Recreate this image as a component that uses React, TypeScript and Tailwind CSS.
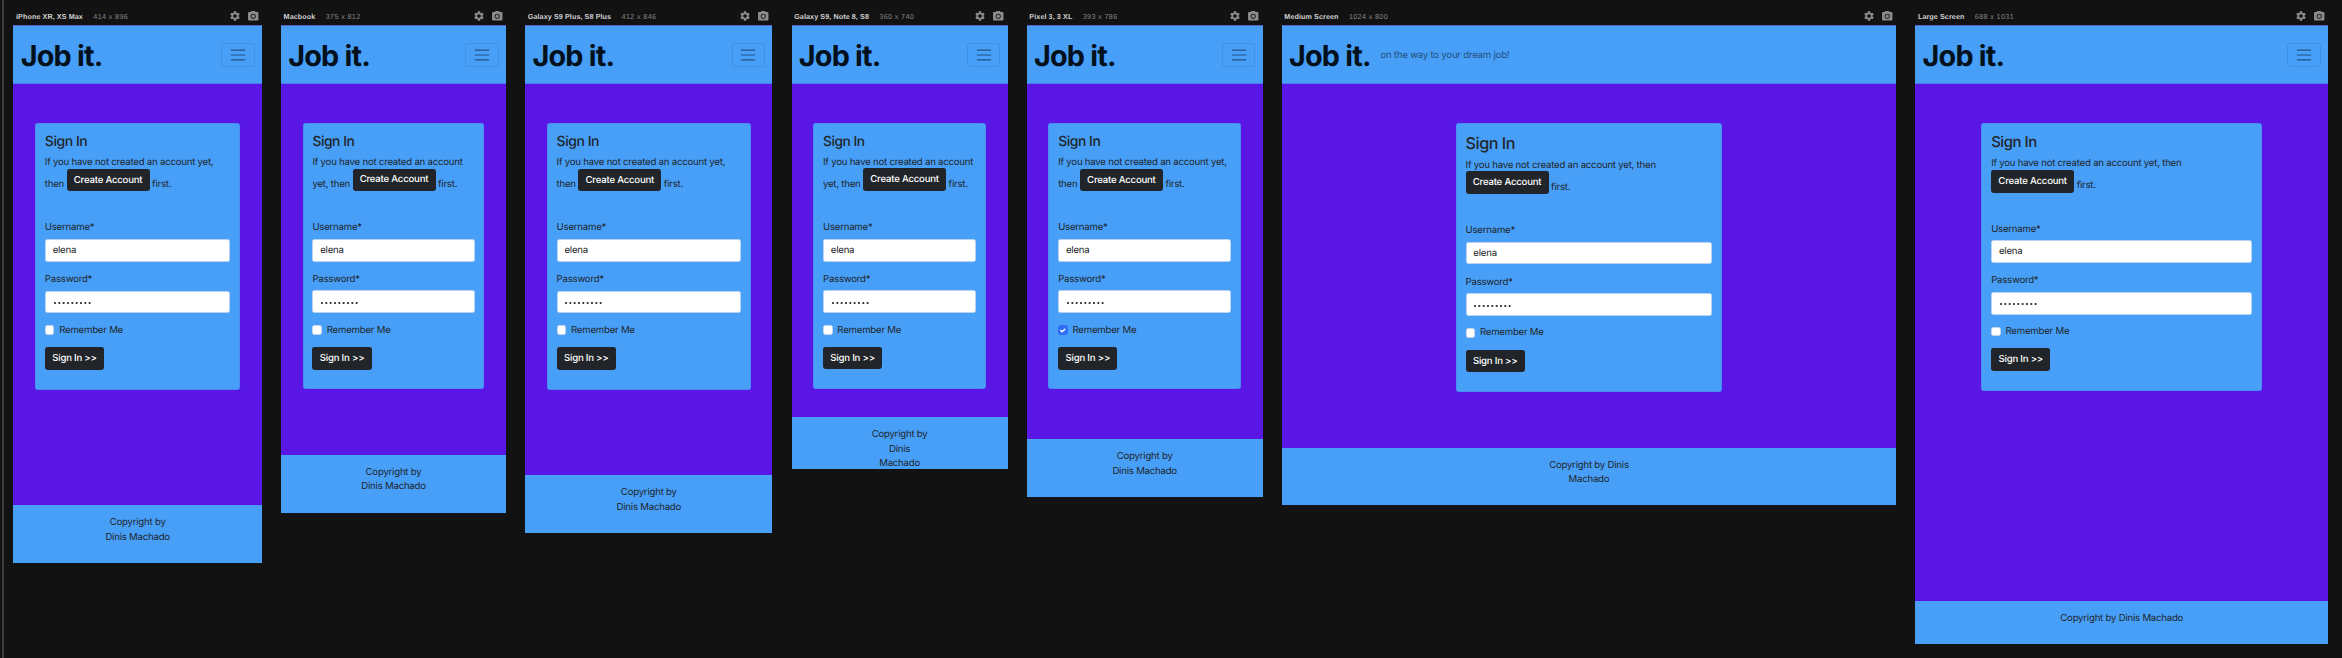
import { MdSettings, MdLocalSee } from "react-icons/md";

type Device = {
  name: string;
  size: string;
  frame: string;
  card: string;
  title: string;
  footer: string;
  wide?: boolean;
  checked?: boolean;
};

const devices: Device[] = [
  { name: "iPhone XR, XS Max", size: "414 x 896", frame: "w-[248.4px] h-[537.6px]", card: "w-[205.2px]", title: "text-[13.97px]", footer: "h-[57.6px] px-[88px]" },
  { name: "Macbook", size: "375 x 812", frame: "w-[225px] h-[487.2px]", card: "w-[181.8px]", title: "text-[13.83px]", footer: "h-[57.6px] px-[78px]" },
  { name: "Galaxy S9 Plus, S8 Plus", size: "412 x 846", frame: "w-[247.2px] h-[507.6px]", card: "w-[204px]", title: "text-[13.97px]", footer: "h-[57.6px] px-[88px]" },
  { name: "Galaxy S9, Note 8, S8", size: "360 x 740", frame: "w-[216px] h-[444px]", card: "w-[172.8px]", title: "text-[13.78px]", footer: "h-[57.6px] px-[78px]" },
  { name: "Pixel 3, 3 XL", size: "393 x 786", frame: "w-[235.8px] h-[471.6px]", card: "w-[192.6px]", title: "text-[13.9px]", footer: "h-[57.6px] px-[82px]", checked: true },
  { name: "Medium Screen", size: "1024 x 800", frame: "w-[614.4px] h-[480px]", card: "w-[266.4px]", title: "text-[16.17px]", footer: "h-[57.6px] px-[259px]", wide: true },
  { name: "Large Screen", size: "688 x 1031", frame: "w-[412.8px] h-[618.6px]", card: "w-[280.8px]", title: "text-[14.96px]", footer: "h-[43.2px] px-[116px]" },
];

function Field({ label, value, password }: { label: string; value: string; password?: boolean }) {
  return (
    <div className="mb-[9.6px]">
      <div className="mb-[3.1px] pt-[1.7px]">{label}</div>
      <div className="flex h-[22.8px] items-center rounded-[2.4px] border border-[#b9d4f2] bg-white px-[6.8px] pt-[1.5px]">
        {password ? (
          <svg viewBox="0 0 40 4" className="mt-[0.5px] h-[4px] w-[40px]" fill="#212529">
            {Array.from(value).map((_, i) => (
              <circle key={i} cx={2 + i * 4.33} cy="2" r="1.1" />
            ))}
          </svg>
        ) : (
          value
        )}
      </div>
    </div>
  );
}

function Card({ device }: { device: Device }) {
  return (
    <div className={`mx-auto mt-[38.4px] shrink-0 rounded-[2.4px] border border-[#4a8bf5] bg-[#479ff8] px-[8.8px] pt-[10.7px] pb-[18.8px] ${device.card}`}>
      <h3 className={`mb-[4.8px] leading-[1.2] font-medium tracking-[-0.45px] ${device.title}`}>Sign In</h3>
      <p className="mb-[27.3px]">
        If you have not created an account yet, then{" "}
        <span className="-mt-[1.6px] mb-[1px] inline-flex h-[22.8px] w-[83px] items-center justify-center rounded-[2.4px] bg-[#212529] pt-[1.4px] align-bottom font-medium whitespace-nowrap text-white">
          Create Account
        </span>{" "}
        first.
      </p>
      <Field label="Username*" value="elena" />
      <Field label="Password*" value="password1" password />
      <div className="mb-[9.6px] flex h-[14.4px] items-center gap-[4.8px]">
        <span className={`flex size-[9.6px] items-center justify-center rounded-[2.4px] border ${device.checked ? "border-[#2f6ef5] bg-[#2f6ef5]" : "border-[#c6d6e8] bg-white"}`}>
          {device.checked && (
            <svg viewBox="0 0 20 20" className="size-[9px] shrink-0" fill="none" stroke="#fff" strokeWidth="3" strokeLinecap="round" strokeLinejoin="round">
              <path d="m6 10 3 3 6-6" />
            </svg>
          )}
        </span>
        <span className="pt-[1.8px]">Remember Me</span>
      </div>
      <div className="flex h-[22.8px] w-[59.3px] items-center justify-center rounded-[2.4px] bg-[#212529] pt-[1.8px] font-medium text-white">
        Sign In &gt;&gt;
      </div>
    </div>
  );
}

function Preview({ device }: { device: Device }) {
  return (
    <section className="shrink-0">
      <div className="flex h-[25.45px] items-end justify-between pr-[2.8px] pb-[2.8px] pl-[2.6px] font-['Liberation_Sans'] text-[7.2px] leading-[12px]">
        <div className="flex gap-[10.4px]">
          <span className="font-bold tracking-[0.08px] text-[#d0d0d0]">{device.name}</span>
          <span className="tracking-[0.36px] text-[#858585]">{device.size}</span>
        </div>
        <div className="flex items-center gap-[5.8px] text-[#8c8c8c]">
          <MdSettings className="size-[12px]" />
          <MdLocalSee className="size-[12.5px]" />
        </div>
      </div>
      <div className={`flex flex-col overflow-hidden bg-[#5a16e5] ${device.frame}`}>
        <header className="flex h-[58.8px] shrink-0 items-center border-t border-b border-t-[#5f62c4] border-b-[#4a7af3] bg-[#479ff8] px-[7.2px]">
          <span className="pt-[4px] text-[28.8px] leading-none font-bold tracking-[-0.8px] text-[#04101c]">Job it.</span>
          {device.wide ? (
            <span className="ml-[9.6px] pt-[3.2px] text-[#24507c]">on the way to your dream job!</span>
          ) : (
            <span className="ml-auto flex h-[24px] w-[33.6px] items-center justify-center rounded-[2.4px] border border-[#4092e6]">
              <svg viewBox="0 0 30 30" className="size-[18px]" fill="none" stroke="#255382" strokeWidth="2" strokeLinecap="round">
                <path d="M4 7h22M4 15h22M4 23h22" />
              </svg>
            </span>
          )}
        </header>
        <Card device={device} />
        <div className="min-h-[28.2px] flex-1" />
        <footer className={`shrink-0 bg-[#479ff8] pt-[11px] text-center ${device.footer}`}>
          <p>Copyright by Dinis Machado</p>
        </footer>
      </div>
    </section>
  );
}

export default function App() {
  return (
    <main className="flex h-[658px] w-[2342px] items-start overflow-hidden bg-[#121212] font-[Inter,sans-serif] text-[9.6px] leading-[14.4px] tracking-[-0.21px] text-[#212529] [text-rendering:geometricPrecision]">
      <div className="h-full w-[4px] shrink-0 border-r-2 border-[#3d3d3d]" />
      <div className="flex items-start gap-[19.2px] pl-[9.45px]">
        {devices.map((device) => (
          <Preview key={device.name} device={device} />
        ))}
      </div>
    </main>
  );
}
